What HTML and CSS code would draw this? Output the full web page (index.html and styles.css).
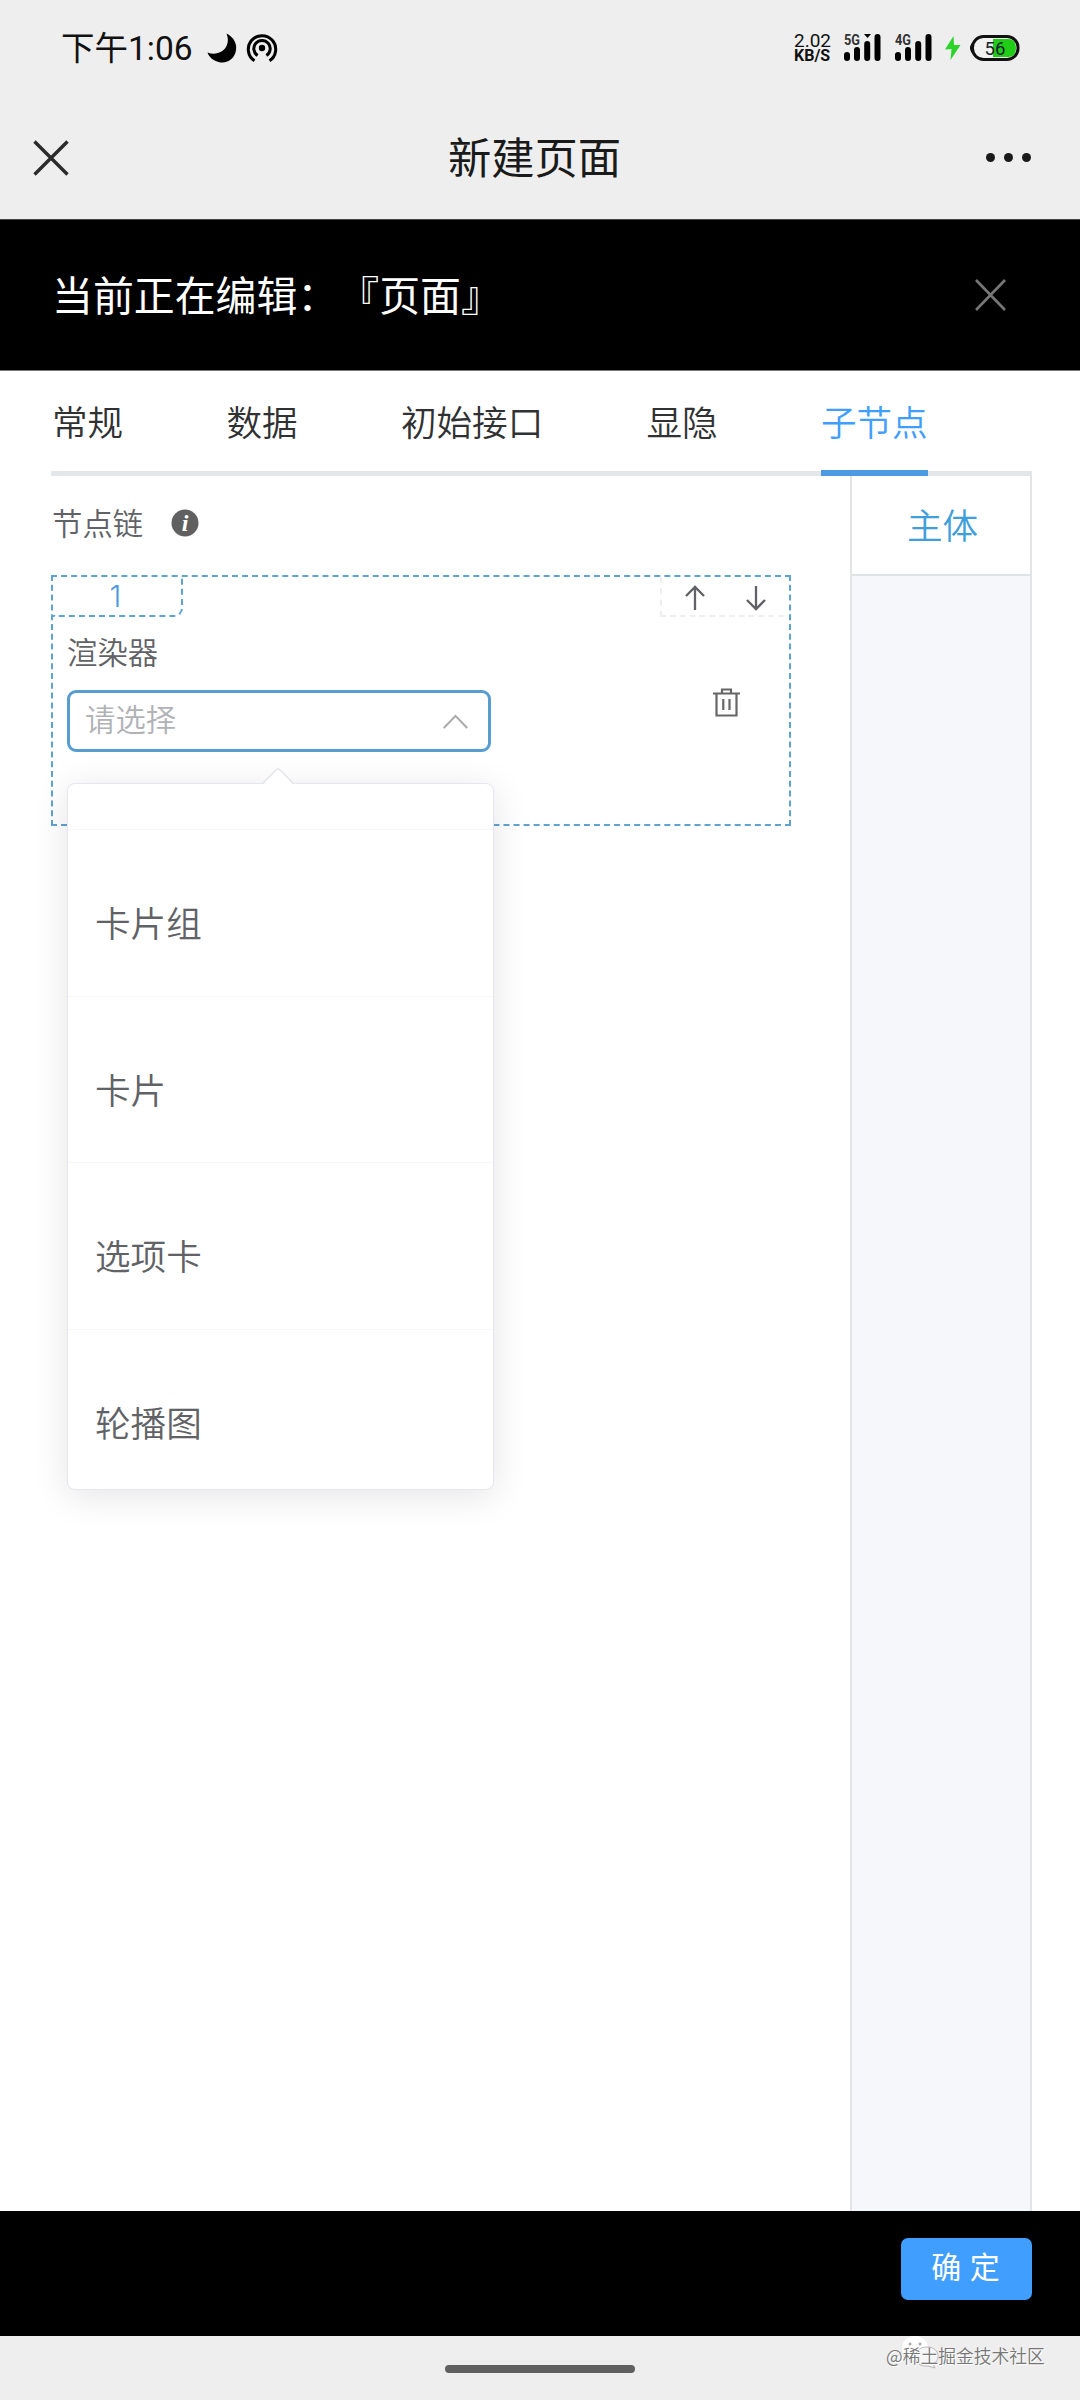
FILE: index.html
```html
<!DOCTYPE html>
<html lang="zh-CN">
<head>
<meta charset="utf-8">
<title>新建页面</title>
<link rel="stylesheet" href="styles.css">
</head>
<body>
<div class="screen">
  <header class="status">
    <div class="status-left">
      <span class="time">下午1:06</span>
      <svg class="moon" viewBox="0 0 30 30"><path d="M19.5 0.5C27 4 31 12 28.500 19.500C26 27 19 31 11.500 29C6 27.500 2 24 0.500 19.500C7 22 14 20.500 18 15.500C21.500 11 21.500 5.500 19.500 0.500Z"/></svg>
      <svg class="hotspot" viewBox="0 0 32 32"><circle cx="16" cy="16" r="3.200" fill="#000"/><g fill="none" stroke="#000" stroke-width="3"><path d="M8.500 28.800A13.700 13.700 0 1 1 23.500 28.800"/><path d="M11.600 23.500A8.200 8.200 0 1 1 20.400 23.500"/></g></svg>
    </div>
    <div class="status-right">
      <div class="speed"><span class="speed-num">2.02</span><span class="speed-unit">KB/S</span></div>
      <svg class="signal" viewBox="0 0 38 30"><g stroke="#000" stroke-width="6" stroke-linecap="round"><path d="M4 22V25M14 17V25M24.200 11V25M34.500 4V25"/></g><path d="M21 1H28L24.500 5Z"/><text x="1" y="12" class="net" textLength="16" lengthAdjust="spacingAndGlyphs">5G</text></svg>
      <svg class="signal" viewBox="0 0 38 30"><g stroke="#000" stroke-width="6" stroke-linecap="round"><path d="M4 22V25M14 17V25M24.200 11V25M34.500 4V25"/></g><text x="1" y="12" class="net" textLength="16" lengthAdjust="spacingAndGlyphs">4G</text></svg>
      <svg class="bolt" viewBox="0 0 16 24"><path d="M8.500 0L0 13.500L6.500 13L5.500 24L15.500 9H9Z" fill="#2bd428"/></svg>
      <svg class="battery" viewBox="0 0 52 28"><path d="M3 9Q-1 14 3 19Z"/><rect x="3.500" y="2.500" width="45.500" height="23" rx="11" fill="#f1f1f1" stroke="#111" stroke-width="3"/><path d="M24 5H39Q47 5 47 14T39 23H24Z" fill="#20cc16"/><text x="26" y="20.500" text-anchor="middle" class="pct">56</text></svg>
    </div>
  </header>
  <nav class="navbar">
    <svg class="nav-close" viewBox="0 0 36 36"><path d="M1.500 1.500L34.500 34.500M34.500 1.500L1.500 34.500" stroke="#2b2b2b" stroke-width="3.400"/></svg>
    <h1 class="nav-title">新建页面</h1>
    <div class="more"><i></i><i></i><i></i></div>
  </nav>
  <div class="editing">
    <span class="editing-title">当前正在编辑：『页面』</span>
    <svg class="edit-close" viewBox="0 0 31 32"><path d="M1 1L30 31M30 1L1 31" stroke="#777" stroke-width="2.600"/></svg>
  </div>
  <main class="content">
    <div class="tabs">
      <span class="tab">常规</span><span class="tab">数据</span><span class="tab">初始接口</span><span class="tab">显隐</span><span class="tab active">子节点</span>
    </div>
    <div class="panes">
      <section class="editor">
        <div class="chain-label"><span>节点链</span>
          <svg class="info" viewBox="0 0 28 28"><circle cx="14" cy="14" r="13.500" fill="#606060"/><text x="14" y="22" text-anchor="middle" class="info-i">i</text></svg>
        </div>
        <div class="node">
          <div class="node-top">
            <div class="index">1</div>
            <div class="moves">
              <svg class="arrow" viewBox="0 0 22 26"><path d="M11 25V2M2 11L11 2L20 11"/></svg>
              <svg class="arrow down" viewBox="0 0 22 26"><path d="M11 1V24M2 15L11 24L20 15"/></svg>
            </div>
          </div>
          <div class="node-body">
            <div class="field">
              <div class="field-label">渲染器</div>
              <div class="select"><span>请选择</span>
                <svg class="chevron" viewBox="0 0 28 16"><path d="M1.500 15L14 2L26.500 15"/></svg>
              </div>
              <div class="popper">
                <svg class="tip" viewBox="0 0 32 18"><path d="M0 18L14 2Q16 0 18 2L32 18Z" fill="#fff"/><path d="M0 16L14 2Q16 0 18 2L32 16" fill="none" stroke="#e4e6ea" stroke-width="1.500"/></svg>
                <ul class="options">
                  <li class="stub"></li><li>卡片组</li><li>卡片</li><li>选项卡</li><li>轮播图</li>
                </ul>
              </div>
            </div>
            <svg class="trash" viewBox="0 0 27 29"><path d="M0 5.500H27M9 5V1.500H18V5M3.500 6V27.500H23.500V6M10.300 11V22M16.500 11V22"/></svg>
          </div>
        </div>
      </section>
      <aside class="side"><div class="side-tab">主体</div></aside>
    </div>
  </main>
  <footer class="actions"><button class="confirm">确 定</button></footer>
  <div class="home"><i class="home-bar"></i>
    <div class="watermark">
      <svg class="wechat" viewBox="0 0 38 34"><ellipse cx="14" cy="13" rx="13" ry="12" fill="#fff"/><circle cx="9" cy="9" r="1.500" fill="#aaa"/><circle cx="19" cy="9" r="1.500" fill="#aaa"/><path d="M26 12C18 12 14 17 14 22S19 32 27 31L34 33L32 29C36 27 37 24 37 21C37 16 33 12 26 12Z" fill="#f5f5f5" stroke="#aaa" stroke-width=".8"/></svg>
      <span>@稀土掘金技术社区</span>
    </div>
  </div>
</div>
</body>
</html>
```
FILE: styles.css
```css
* { box-sizing: border-box; }
body {
  margin: 0;
  background: #fff;
  font-family: "Noto Sans CJK SC", sans-serif;
  font-weight: 350;
  color: #606266;
}
svg { display: block; flex: none; overflow: visible; }
.screen { width: 1080px; height: 2400px; display: flex; flex-direction: column; overflow: hidden; }

.status { height: 96px; background: #eee; display: flex; justify-content: space-between; padding: 0 59px 0 61px; align-items: center; color: #111; font-weight: 400; }
.status-left { display: flex; align-items: center; }
.time { font-family: Roboto, "Noto Sans CJK SC", sans-serif; font-size: 33.500px; line-height: 40px; width: 146px; padding-top: 1px; white-space: nowrap; }
.moon { width: 30px; height: 30px; }
.hotspot { width: 32px; height: 32px; margin-left: 9px; }
.status-right { display: flex; align-items: center; }
.speed { display: flex; flex-direction: column; width: 38px; margin-right: 11px; padding-top: 1px; font-family: Roboto, sans-serif; white-space: nowrap; }
.speed-num { font-size: 19px; line-height: 15px; }
.speed-unit { font-size: 16px; line-height: 16px; font-weight: 700; }
.signal { width: 38px; height: 30px; margin-right: 13px; }
.net { font: 700 15px Roboto, sans-serif; fill: #333; }
.bolt { width: 16px; height: 24px; margin-right: 8px; }
.battery { width: 52px; height: 28px; }
.pct { font: 18.500px Roboto, sans-serif; fill: #123; }

.navbar { height: 123px; background: #eee; display: grid; grid-template-columns: 60px 1fr 60px; align-items: center; padding: 0 49px 0 33px; }
.nav-close { width: 36px; height: 36px; }
.nav-title { margin: 0; padding: 0 0 5px 5px; font-size: 43.300px; line-height: 60px; font-weight: 400; text-align: center; color: #1a1a1a; }
.more { display: flex; gap: 9px; justify-content: flex-end; }
.more i { width: 9px; height: 9px; border-radius: 50%; background: #1a1a1a; }

.editing { height: 152px; background: #000; border-top: 1px solid #444; border-bottom: 1px solid #777; color: #fff; display: flex; align-items: center; justify-content: space-between; padding: 0 74px 0 52px; font-size: 40.900px; line-height: 60px; font-weight: 400; }
.editing-title { text-spacing-trim: space-all; padding-bottom: 2px; }
.edit-close { width: 31px; height: 32px; }

.content { flex: 1; min-height: 0; padding: 0 48px 0 51px; display: flex; flex-direction: column; }
.tabs { height: 105px; display: flex; gap: 103.300px; padding-left: 1px; box-shadow: inset 0 -5px #e4e7e9; color: #303133; }
.tab { font-size: 35.600px; line-height: 100px; height: 105px; white-space: nowrap; }
.tab.active { color: #409eff; border-bottom: 6px solid #4c9ae2; }
.panes { flex: 1; display: flex; justify-content: space-between; }
.editor { width: 740px; padding-top: 24px; }
.chain-label { display: flex; align-items: center; height: 46px; padding-left: 1px; font-size: 30.400px; gap: 28px; }
.chain-label span { padding-bottom: 3px; }
.info { width: 28px; height: 28px; }
.info-i { font: italic 700 24px "Liberation Serif", serif; fill: #fff; }
.node { margin-top: 29px; height: 251px; border: 2px dashed #5fa3d2; }
.node-top { display: flex; justify-content: space-between; height: 40px; }
.index { width: 130px; border: dashed #5fa3d2; border-width: 0 2px 2px 0; border-bottom-right-radius: 9px; color: #4a98de; font-family: Inter, sans-serif; font-size: 30px; line-height: 38px; text-align: center; padding-right: 3px; }
.moves { width: 124px; margin-right: 5px; border: dashed #eee; border-width: 0 0 2px 2px; display: flex; gap: 39px; padding: 8px 0 0 22px; }
.arrow { width: 22px; height: 26px; fill: none; stroke: #606266; stroke-width: 2.300; }
.node-body { display: flex; justify-content: space-between; padding: 14px 49px 0 14px; }
.field { position: relative; width: 424px; }
.field-label { font-size: 30.400px; line-height: 40px; }
.select { margin-top: 19px; height: 62px; border: 3px solid #589dd0; border-radius: 9px; background: #fff; display: flex; align-items: center; justify-content: space-between; padding: 0 19px 6px 15px; font-size: 30.400px; line-height: 50px; color: #b0b2b6; }
.chevron { width: 27px; height: 15px; margin-top: 6px; fill: none; stroke: #aaa; stroke-width: 2.200; }
.trash { width: 27px; height: 29px; margin-top: 57px; fill: none; stroke: #666; stroke-width: 2.200; }
.popper { position: absolute; left: 0; top: 152px; width: 427px; z-index: 2; }
.tip { position: absolute; left: 195px; top: -15px; width: 32px; height: 18px; z-index: 1; }
.options { list-style: none; margin: 0; padding: 0; height: 707px; overflow: hidden; background: #fff; border: 1.500px solid #e4e7ed; border-radius: 8px; box-shadow: 0 6px 36px rgba(0,0,0,.11); }
.options li { height: 166.600px; line-height: 184px; padding-left: 27px; font-size: 35.600px; border-top: 1px solid #f5f7f8; color: #606266; }
.options .stub { height: 45px; border: 0; }
.side { width: 182px; border: solid #e2e4e6; border-width: 0 2px; background: #f5f7fb; }
.side-tab { height: 100px; background: #fff; border-bottom: 2px solid #e0e3e5; color: #409eda; font-size: 35.600px; line-height: 95px; text-align: center; padding-left: 3px; }

.actions { height: 125px; background: #000; padding: 27px 48px 0; display: flex; justify-content: flex-end; align-items: flex-start; }
.confirm { width: 131px; height: 62px; padding: 0 2px 8px 0; border: 0; border-radius: 7px; background: #409eff; color: #fff; font: 30px/50px "Noto Sans CJK SC", sans-serif; word-spacing: 2px; white-space: nowrap; }
.home { position: relative; height: 64px; background: #eee; display: flex; justify-content: center; padding-top: 29px; }
.home-bar { width: 190px; height: 8px; border-radius: 4px; background: #606060; }
.watermark { position: absolute; left: 886px; top: 6px; font-size: 17.800px; line-height: 26px; color: #777; white-space: nowrap; }
.watermark span { position: relative; text-shadow: 1px 1px #fff; }
.wechat { position: absolute; left: 15px; top: -7px; width: 38px; height: 34px; }
```
